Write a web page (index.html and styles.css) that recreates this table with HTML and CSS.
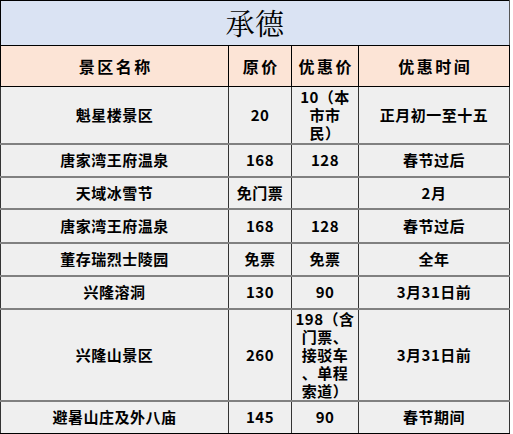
FILE: index.html
```html
<!DOCTYPE html>
<html lang="zh-CN">
<head>
<meta charset="utf-8">
<title>承德</title>
<link rel="stylesheet" href="styles.css">
</head>
<body>
<table class="sheet">
  <colgroup>
    <col class="c-name">
    <col class="c-price">
    <col class="c-deal">
    <col class="c-time">
  </colgroup>
  <thead>
    <tr class="title-row"><th colspan="4" class="title">承德</th></tr>
    <tr class="head-row">
      <th>景区名称</th>
      <th>原价</th>
      <th>优惠价</th>
      <th>优惠时间</th>
    </tr>
  </thead>
  <tbody>
    <tr class="r-tall1">
      <td>魁星楼景区</td>
      <td>20</td>
      <td class="multi">10（本<br>市市<br>民）</td>
      <td>正月初一至十五</td>
    </tr>
    <tr class="r-a">
      <td>唐家湾王府温泉</td>
      <td>168</td>
      <td>128</td>
      <td>春节过后</td>
    </tr>
    <tr class="r-b">
      <td>天域冰雪节</td>
      <td>免门票</td>
      <td></td>
      <td>2月</td>
    </tr>
    <tr class="r-c">
      <td>唐家湾王府温泉</td>
      <td>168</td>
      <td>128</td>
      <td>春节过后</td>
    </tr>
    <tr class="r-a">
      <td>董存瑞烈士陵园</td>
      <td>免票</td>
      <td>免票</td>
      <td>全年</td>
    </tr>
    <tr class="r-a">
      <td>兴隆溶洞</td>
      <td>130</td>
      <td>90</td>
      <td>3月31日前</td>
    </tr>
    <tr class="r-tall2">
      <td>兴隆山景区</td>
      <td>260</td>
      <td class="multi">198（含<br>门票、<br>接驳车<br>、单程<br>索道）</td>
      <td>3月31日前</td>
    </tr>
    <tr class="r-last">
      <td>避暑山庄及外八庙</td>
      <td>145</td>
      <td>90</td>
      <td>春节期间</td>
    </tr>
  </tbody>
</table>
</body>
</html>
```

FILE: styles.css
```css
html, body {
  margin: 0;
  padding: 0;
  background: #ffffff;
}

.sheet {
  border-collapse: collapse;
  table-layout: fixed;
  width: 509px;
  font-family: "Noto Sans CJK SC", "Noto Sans", sans-serif;
  font-size: 15px;
  font-weight: 700;
  color: #000;
  border-left: 1px solid #000;
  border-top: 1px solid #000;
  border-right: 1px solid #555;
  border-bottom: 2px solid #000;
}

.c-name { width: 228px; }
.c-price { width: 63px; }
.c-deal { width: 67px; }
.c-time { width: 151px; }

.sheet th,
.sheet td {
  padding: 0 2px;
  text-align: center;
  vertical-align: middle;
  line-height: 18px;
  letter-spacing: 0.5px;
  overflow: hidden;
}

.title-row {
  height: 45px;
}

.title {
  background: #dae3f3;
  font-family: "Noto Serif CJK SC", "Noto Sans CJK SC", serif;
  font-size: 29px;
  font-weight: 400;
  letter-spacing: 0;
  line-height: 34px;
  border-bottom: 1px solid #000;
}

.head-row {
  height: 41px;
}

.sheet .head-row th {
  background: #fce4d6;
  font-size: 16px;
  letter-spacing: 2.5px;
  text-indent: 2.5px;
  border-left: 1px solid #000;
  border-right: 1px solid #000;
  border-bottom: 1px solid #000;
}

.sheet td {
  background: #efefef;
  border-left: 1px solid #333;
  border-right: 1px solid #333;
  border-bottom: 2px solid #808080;
}

.sheet td.multi {
  line-height: 18px;
}

.r-tall1 { height: 57px; }
.r-a { height: 33px; }
.r-b { height: 32px; }
.r-c { height: 34px; }
.r-tall2 { height: 90px; }
.r-last { height: 33px; }

.sheet tr.r-last td {
  border-bottom: 2px solid #000;
}
```
